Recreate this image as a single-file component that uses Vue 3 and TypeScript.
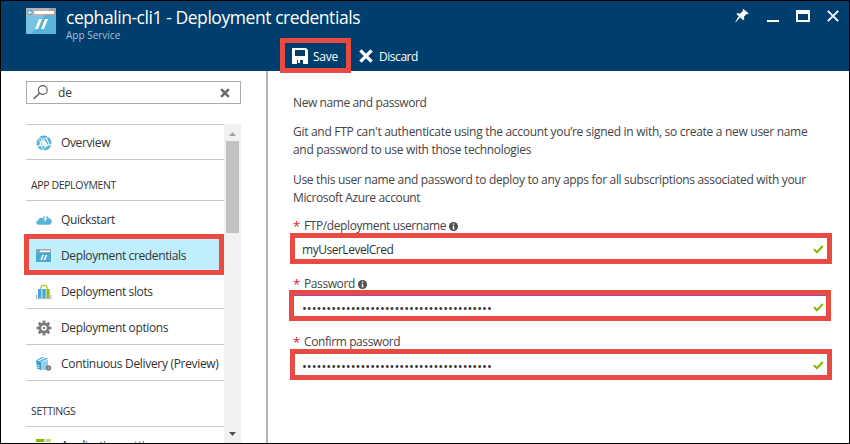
<script setup lang="ts">
import { ref } from 'vue'

interface MenuItem {
  label: string
  icon: string
  active?: boolean
}

interface Field {
  id: string
  label: string
  value: string
  info: boolean
  secret: boolean
}

const query = ref('de')
const deployment: MenuItem[] = [
  { label: 'Quickstart', icon: 'cloud' },
  { label: 'Deployment credentials', icon: 'window', active: true },
  { label: 'Deployment slots', icon: 'slots' },
  { label: 'Deployment options', icon: 'gear' },
  { label: 'Continuous Delivery (Preview)', icon: 'package' },
]
const mask = '•'.repeat(39)
const fields: Field[] = [
  { id: 'user', label: 'FTP/deployment username', value: 'myUserLevelCred', info: true, secret: false },
  { id: 'pass', label: 'Password', value: mask, info: true, secret: true },
  { id: 'confirm', label: 'Confirm password', value: mask, info: false, secret: true },
]
const teeth = [0, 45, 90, 135, 180, 225, 270, 315]
</script>

<template>
  <div class="blade">
    <header class="head">
      <div class="brand">
        <svg class="logo" width="30" height="26" viewBox="0 0 30 26">
          <rect width="30" height="26" rx="1" fill="#59b4d9" />
          <rect width="30" height="8" fill="#a0a1a2" />
          <path d="M0 0H24L5 26H0Z" fill="#fff" opacity=".2" />
          <rect x="8" y="3" width="20" height="3" fill="#fff" />
          <circle cx="4" cy="4.5" r="2.8" fill="#59b4d9" />
          <path d="M6 4.5H2.5M4 3L2.5 4.5L4 6" fill="none" stroke="#fff" stroke-width=".9" />
          <path d="M13 11H16L12 21H9ZM19 11H22L18 21H15Z" fill="#fff" />
        </svg>
        <div class="titles">
          <h1>cephalin-cli1 - Deployment credentials</h1>
          <span class="sub">App Service</span>
        </div>
        <div class="controls">
          <svg class="pin" width="14" height="15" viewBox="0 0 14 15">
            <path d="M8.4 1L13.6 5.2L12.4 6.4L11.4 6L9 8.8L9.3 11.2L8.2 12.2L5.1 9.5L.8 14.2L.4 13.8L3.7 8.3L1.3 5.8L2.4 5.2L5.2 5.5L8 3L7.3 2Z" fill="#fff" />
          </svg>
          <svg width="12" height="15" viewBox="0 0 12 15"><path d="M0 12H12V14H0Z" fill="#fff" /></svg>
          <svg width="14" height="15" viewBox="0 0 14 15">
            <path d="M0 2H14V14H0ZM2 6V12H12V6Z" fill="#fff" fill-rule="evenodd" />
          </svg>
          <svg width="12" height="15" viewBox="0 0 12 15">
            <path d="M.8 2.8L11.2 13.2M11.2 2.8L.8 13.2" stroke="#fff" stroke-width="1.9" />
          </svg>
        </div>
      </div>
      <div class="commands">
        <button class="command marked">
          <svg width="16" height="16" viewBox="0 0 16 16">
            <path d="M0 0H14L16 2V16H11V12H8V15H6V12H5V16H0ZM3 2V8H13V2Z" fill="#fff" fill-rule="evenodd" />
          </svg>
          <span class="save">Save</span>
        </button>
        <button class="command plain">
          <svg width="14" height="14" viewBox="0 0 14 14">
            <path d="M1.4 1.4L12.6 12.6M12.6 1.4L1.4 12.6" stroke="#fff" stroke-width="3.4" />
          </svg>
          <span class="discard">Discard</span>
        </button>
      </div>
    </header>

    <div class="body">
      <aside class="side">
        <div class="search">
          <svg width="15" height="15" viewBox="0 0 15 15">
            <circle cx="9.8" cy="5" r="4.4" fill="none" stroke="#555" stroke-width="1.1" />
            <path d="M6.6 8.3L.6 14" stroke="#555" stroke-width="1.3" />
          </svg>
          <span class="query">{{ query }}</span>
          <svg width="10" height="10" viewBox="0 0 10 10">
            <path d="M1.2 1.2L8.8 8.8M8.8 1.2L1.2 8.8" stroke="#666b70" stroke-width="2.5" />
          </svg>
        </div>

        <div class="scroller">
          <nav class="menu">
            <a class="item overview">
              <svg width="16" height="16" viewBox="0 0 16 16">
                <circle cx="8" cy="8" r="7.5" fill="#59b4d9" />
                <path d="M4 4.5L10.5 3.5L13.2 9.5L7 13L4.5 9.8ZM4 4.5L2 1.8M10.5 3.5L12 1M13.2 9.5L16 10M7 13L7 16M4.5 9.8L1 12" fill="none" stroke="#fff" stroke-width="1.1" />
                <path d="M5.3 5.5L9.8 5L11.8 9.2L7.4 11.8L5.7 9.5Z" fill="#fff" />
                <circle cx="4.2" cy="4.6" r="1.6" fill="#59b4d9" stroke="#fff" stroke-width=".6" />
                <circle cx="7.2" cy="12.4" r="1.7" fill="#59b4d9" stroke="#fff" stroke-width=".6" />
                <path d="M9 4.5L12 9" stroke="#59b4d9" stroke-width="1.2" />
              </svg>
              <span>Overview</span>
            </a>
            <h2 class="first">APP DEPLOYMENT</h2>
            <a v-for="item in deployment" :key="item.label" class="item" :class="[item.icon, { active: item.active }]">
              <svg v-if="item.icon === 'cloud'" width="16" height="16" viewBox="0 0 16 16">
                <path d="M3 12.8C-.6 12.8-.5 8.2 2.6 8.2C2.8 5.6 5.5 5.3 6.5 6.3C7 3.2 11.8 2.5 12.6 6.2C15.6 6.3 16.4 9 15.4 10.8C14.8 12.2 14 12.8 12.6 12.8Z" fill="#59b4d9" />
                <path d="M9.6 3L7.6 7.4H9.2L8 10.6L11.4 6.4H9.9L11.4 3Z" fill="#fff" />
              </svg>
              <svg v-else-if="item.icon === 'window'" width="16" height="16" viewBox="0 0 16 16">
                <rect y="1" width="15" height="13" fill="#4ba9d4" />
                <rect y="1" width="15" height="4" fill="#98a5ad" />
                <path d="M4 2.5H14V4H4Z" fill="#fff" />
                <circle cx="2" cy="3.2" r="1.2" fill="#59b4d9" />
                <path d="M6.3 7H8L6 12H4.3ZM9.6 7H11.3L9.3 12H7.6Z" fill="#fff" />
              </svg>
              <svg v-else-if="item.icon === 'slots'" width="16" height="16" viewBox="0 0 16 16">
                <path d="M5 5.5V3.8C5 .4 11 .4 11 3.8V5.5" fill="none" stroke="#a9cf3a" stroke-width="1.4" />
                <path d="M2 5H5.5V14H2ZM6.3 5H9.7V14H6.3Z" fill="#45a8d8" />
                <path d="M10.4 5H13.6V14H10.4Z" fill="#8cbf1a" />
                <path d="M.5 10.5V14.7H15V10.5" fill="none" stroke="#a6b3bd" />
              </svg>
              <svg v-else-if="item.icon === 'gear'" width="16" height="16" viewBox="0 0 16 16">
                <rect v-for="a in teeth" :key="a" x="6.6" y=".6" width="2.8" height="4" fill="#7a7a7a" :transform="`rotate(${a} 8 8)`" />
                <circle cx="8" cy="8" r="4.1" fill="none" stroke="#7a7a7a" stroke-width="2.6" />
                <circle cx="8" cy="8" r="1.2" fill="#7a7a7a" />
              </svg>
              <svg v-else width="16" height="16" viewBox="0 0 16 16">
                <path d="M0 4.5L5.4 5.8V14.2L1 12.5Z" fill="#3999c6" />
                <path d="M5.4 5.8L12 4V11L10 13.5L5.4 14.2Z" fill="#8fd0ea" />
                <path d="M0 4.3L6 1L12.4 2.4L5.4 5.6Z" fill="#59b4d9" />
                <path d="M2.6 4.8L9 1.6" stroke="#fff" fill="none" stroke-width="1" />
                <path d="M1.2 9L3.5 9.7M1.2 11L3.5 11.7" stroke="#fff" stroke-width=".8" />
                <circle cx="12.4" cy="12" r="2.8" fill="#7a7a7a" />
                <circle cx="12.4" cy="12" r=".9" fill="#b5b5b5" />
              </svg>
              <span>{{ item.label }}</span>
            </a>
            <h2 class="second">SETTINGS</h2>
            <a class="item settings">
              <svg width="16" height="16" viewBox="0 0 16 16">
                <path d="M0 1H15V4H0Z" fill="#c5dc7a" /><path d="M0 1H8V4H0Z" fill="#7fba00" />
                <path d="M8 0H10V5H8Z" fill="#e5e5e5" /><path d="M0 7H15V10H0Z" fill="#59b4d9" />
              </svg>
              <span>Application settings</span>
            </a>
          </nav>
          <div class="bar">
            <svg width="7" height="4" viewBox="0 0 7 4"><path d="M0 4L3.5 0L7 4Z" fill="#a3a3a3" /></svg>
            <div class="thumb"></div>
            <svg width="7" height="4" viewBox="0 0 7 4"><path d="M0 0L3.5 4L7 0Z" fill="#505050" /></svg>
          </div>
        </div>
      </aside>

      <main class="content">
        <p class="intro">New name and password</p>
        <p>
          <span class="l1">Git and FTP can't authenticate using the account you’re signed in with, so create a new user name</span><br />
          <span class="l2">and password to use with those technologies</span>
        </p>
        <p>
          <span class="l3">Use this user name and password to deploy to any apps for all subscriptions associated with your</span><br />
          <span class="l4">Microsoft Azure account</span>
        </p>
        <div v-for="f in fields" :key="f.id" class="field" :class="f.id">
          <div class="label">
            <span class="star">*</span>
            <span class="name">{{ f.label }}</span>
            <svg v-if="f.info" width="9" height="9" viewBox="0 0 9 9">
              <circle cx="4.5" cy="4.5" r="4.5" fill="#4d4d4d" />
              <path d="M3.8 1.5H5.3V2.8H3.8ZM3.3 3.7H5.2V6.5H5.8V7.3H3.3V6.5H3.9V4.5H3.3Z" fill="#fff" />
            </svg>
          </div>
          <div class="box">
            <span :class="f.secret ? 'dots' : 'plaintext'">{{ f.value }}</span>
            <svg width="11" height="9" viewBox="0 0 11 9">
              <path d="M.9 4.1L3.9 7.2L9.8 1" fill="none" stroke="#7fba00" stroke-width="2" />
            </svg>
          </div>
        </div>
      </main>
    </div>
  </div>
</template>

<style>
body {
  margin: 0;
  overflow: hidden;
}
</style>

<style scoped>
.blade {
  box-sizing: border-box;
  width: 850px;
  height: 444px;
  border: 1px solid #000;
  background: #fff;
  color: #333;
  font: 12px/18px 'Open Sans', 'Noto Sans', sans-serif;
  letter-spacing: -0.37px;
  display: flex;
  flex-direction: column;
  overflow: hidden;
  white-space: nowrap;
}
svg {
  display: block;
  flex: none;
}
h1, h2, p {
  margin: 0;
  font-weight: 400;
}
.head {
  height: 70px;
  flex: none;
  background: #003e6e;
  color: #fff;
  position: relative;
  z-index: 1;
}
.brand {
  display: flex;
  height: 37px;
  padding: 0 10px 0 25px;
}
.logo {
  margin-top: 7px;
}
.titles {
  margin-left: 10px;
  flex: 1;
}
h1 {
  font-size: 17.5px;
  line-height: 24px;
  padding-top: 4px;
  letter-spacing: -0.44px;
}
.sub {
  display: block;
  font-size: 10px;
  line-height: 14px;
  margin-top: -1px;
  letter-spacing: 0;
  color: #a9bfd2;
}
.controls {
  display: flex;
  gap: 17px;
  padding-top: 7px;
}
.pin {
  margin-right: 1px;
}
.commands {
  display: flex;
  padding-left: 279px;
}
.command {
  box-sizing: border-box;
  height: 35px;
  display: flex;
  align-items: center;
  gap: 5px;
  padding: 0 7px;
  border: 0;
  background: none;
  color: #fff;
  font: inherit;
  letter-spacing: -0.45px;
}
.command span {
  padding-top: 2px;
}
.marked {
  width: 71px;
  border: 5px solid #e94b43;
}
.plain {
  padding-left: 8px;
  gap: 6px;
}
.command .save {
  letter-spacing: -0.25px;
}
.body {
  flex: 1;
  min-height: 0;
  display: flex;
}
.side {
  box-sizing: border-box;
  width: 267px;
  padding: 10px 25px 0;
  border-right: 2px solid #b5b5b5;
  display: flex;
  flex-direction: column;
}
.search {
  box-sizing: border-box;
  width: 215px;
  height: 23px;
  flex: none;
  border: 1px solid #aaa;
  display: flex;
  align-items: center;
  padding: 0 10px 0 6px;
}
.query {
  flex: 1;
  margin-left: 10px;
  letter-spacing: -0.1px;
}
.scroller {
  display: flex;
  flex: 1;
  min-height: 0;
  width: 215px;
  margin-top: 20px;
}
.menu {
  width: 198px;
  border-top: 1px solid #c8c8c8;
}
.item {
  box-sizing: border-box;
  display: flex;
  align-items: center;
  gap: 9px;
  height: 36px;
  padding: 2px 0 0 10px;
  border-bottom: 1px solid #c8c8c8;
}
.item span {
  padding-top: 1px;
}
.overview {
  height: 35px;
  padding-top: 1px;
}
h2 {
  box-sizing: border-box;
  font-size: 10.5px;
  letter-spacing: -0.38px;
  padding-left: 5px;
  border-bottom: 1px solid #c8c8c8;
}
.first {
  height: 41px;
  padding-top: 16px;
}
.second {
  height: 46px;
  padding-top: 21px;
}
.cloud {
  height: 35px;
  border-bottom: 0;
}
.package {
  letter-spacing: -0.32px;
}
.active {
  position: relative;
  width: 200px;
  height: 41px;
  margin: -2px 0 -2px -2px;
  padding-left: 7px;
  border: 5px solid #e94b43;
  background: #bfeffc;
}
.bar {
  width: 17px;
  background: #f1f1f1;
  display: flex;
  flex-direction: column;
  align-items: center;
  padding: 8px 0 7px;
  box-sizing: border-box;
}
.thumb {
  width: 13px;
  height: 92px;
  margin-top: 5px;
  margin-bottom: auto;
  background: #c1c1c1;
}
.content {
  padding: 23px 0 0 25px;
  color: #444;
}
p {
  margin-bottom: 12px;
}
.intro {
  margin-bottom: 11px;
  letter-spacing: -0.4px;
}
.l1 {
  letter-spacing: -0.3px;
}
.l2, .l3 {
  letter-spacing: -0.32px;
}
.field {
  height: 57px;
}
.pass {
  height: 59px;
}
.label {
  display: flex;
  align-items: center;
  height: 14px;
  letter-spacing: -0.4px;
}
.pass .label {
  box-sizing: border-box;
  padding-top: 2px;
}
.star {
  width: 11px;
  color: #e81123;
  font-size: 13px;
}
.label svg {
  margin-left: 3px;
}
.box {
  box-sizing: border-box;
  width: 542px;
  height: 31px;
  margin-left: -3px;
  border: 5px solid #e94b43;
  padding: 2px 3px 0 7px;
  display: flex;
  align-items: center;
  justify-content: space-between;
  color: #333;
}
.pass .box {
  margin-left: -4px;
  padding: 4px 2px 0 8px;
  box-shadow: inset 0 1px #9a4aa8;
}
.plaintext {
  letter-spacing: -0.48px;
}
.dots {
  font-size: 13px;
  letter-spacing: -0.02px;
}
</style>
